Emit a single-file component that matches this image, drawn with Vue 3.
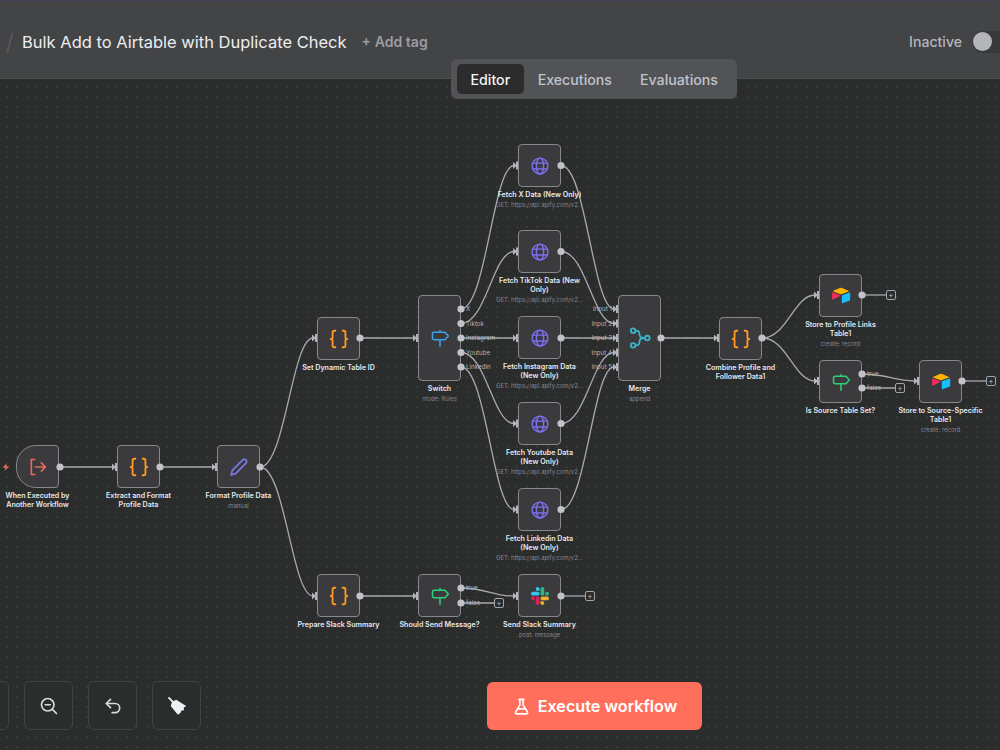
<script setup>
const nodes = [
  { id: 'trig', x: 16, y: 445, icon: 'exit', lines: ['When Executed by', 'Another Workflow'], shape: 'trigger' },
  { id: 'ext', x: 117, y: 445, icon: 'code', lines: ['Extract and Format', 'Profile Data'] },
  { id: 'fmt', x: 217, y: 445, icon: 'pen', lines: ['Format Profile Data'], sub: 'manual' },
  { id: 'set', x: 317, y: 317, icon: 'code', lines: ['Set Dynamic Table ID'] },
  { id: 'sw', x: 418, y: 295, h: 86, icon: 'sign', tone: 'blue', lines: ['Switch'], sub: 'mode: Rules' },
  { id: 'x', x: 518, y: 144, icon: 'globe', lines: ['Fetch X Data (New Only)'], sub: 'GET: https://api.apify.com/v2...' },
  { id: 'tt', x: 518, y: 230, icon: 'globe', lines: ['Fetch TikTok Data (New', 'Only)'], sub: 'GET: https://api.apify.com/v2...' },
  { id: 'ig', x: 518, y: 316, icon: 'globe', lines: ['Fetch Instagram Data', '(New Only)'], sub: 'GET: https://api.apify.com/v2...' },
  { id: 'yt', x: 518, y: 402, icon: 'globe', lines: ['Fetch Youtube Data', '(New Only)'], sub: 'GET: https://api.apify.com/v2...' },
  { id: 'li', x: 518, y: 488, icon: 'globe', lines: ['Fetch Linkedin Data', '(New Only)'], sub: 'GET: https://api.apify.com/v2...' },
  { id: 'mg', x: 618, y: 295, h: 86, icon: 'merge', lines: ['Merge'], sub: 'append' },
  { id: 'cb', x: 719, y: 317, icon: 'code', lines: ['Combine Profile and', 'Follower Data1'] },
  { id: 'sp', x: 819, y: 274, icon: 'air', lines: ['Store to Profile Links', 'Table1'], sub: 'create: record' },
  { id: 'is', x: 819, y: 360, icon: 'sign', tone: 'green', lines: ['Is Source Table Set?'] },
  { id: 'ss', x: 919, y: 360, icon: 'air', lines: ['Store to Source-Specific', 'Table1'], sub: 'create: record' },
  { id: 'pr', x: 317, y: 574, icon: 'code', lines: ['Prepare Slack Summary'] },
  { id: 'sh', x: 418, y: 574, icon: 'sign', tone: 'green', lines: ['Should Send Message?'] },
  { id: 'sl', x: 518, y: 574, icon: 'slack', lines: ['Send Slack Summary'], sub: 'post: message' },
]

const swY = [309, 323.5, 338, 352.5, 367]
const fetchY = [165.5, 251.5, 338, 423.5, 509.5]
const links = [
  [60, 467, 117, 467], [160, 467, 217, 467], [260, 467, 317, 338], [260, 467, 317, 596],
  [360, 338, 418, 338], [661, 338, 719, 338], [762, 338, 819, 295], [762, 338, 819, 381],
  [862, 374, 919, 381], [360, 596, 418, 596], [461, 588, 518, 596],
]
swY.forEach((y, i) => links.push([461, y, 518, fetchY[i]]))
fetchY.forEach((y, i) => links.push([561, y, 618, swY[i]]))

const curve = ([a, b, c, d]) => {
  const off = b === d ? 0 : 25
  return `M${a} ${b}C${a + off} ${b} ${c - off} ${d} ${c - 4} ${d}`
}
const edges = links.map(curve)
const stubs = [
  [862, 295, 886], [862, 388, 895], [962, 381, 986], [461, 603, 494], [561, 596, 585],
]
const pluses = [[891, 295], [900, 388], [991, 381], [499, 603], [590, 596]]
const inputs = links.map(l => [l[2], l[3]])
const dots = [
  [60, 467], [160, 467], [260, 467], [360, 338], [661, 338], [762, 338], [862, 295], [862, 374], [862, 388],
  [962, 381], [360, 596], [461, 588], [461, 603], [561, 596],
  ...swY.map(y => [461, y]), ...fetchY.map(y => [561, y]),
]
const swNames = ['X', 'Tiktok', 'Instagram', 'Youtube', 'LinkedIn']
const ports = [
  ...swNames.map((t, i) => ({ t, x: 466, y: swY[i], end: false })),
  ...swY.map((y, i) => ({ t: `Input ${i + 1}`, x: 612, y, end: true })),
  { t: 'true', x: 466, y: 588, end: false },
  { t: 'false', x: 466, y: 603, end: false },
  { t: 'true', x: 867, y: 374, end: false },
  { t: 'false', x: 867, y: 388, end: false },
]
const px = v => `${v}px`
</script>

<template>
  <div class="app">
    <header class="topbar">
      <span class="slash">/</span>
      <h1 class="title">Bulk Add to Airtable with Duplicate Check</h1>
      <span class="tag">+ Add tag</span>
      <span class="state">Inactive</span>
      <span class="toggle"><i class="knob"></i></span>
    </header>

    <nav class="tabs">
      <span class="tab on">Editor</span>
      <span class="tab">Executions</span>
      <span class="tab">Evaluations</span>
    </nav>

    <main class="canvas">
      <div class="plane">
        <svg class="wires" width="1000" height="750" viewBox="0 0 1000 750">
          <path v-for="(d, i) in edges" :key="i" :d="d" class="wire" />
          <path v-for="(s, i) in stubs" :key="'s' + i" :d="`M${s[0]} ${s[1]}H${s[2]}`" class="wire" />
          <g v-for="(p, i) in inputs" :key="'i' + i">
            <path :d="`M${p[0] - 5} ${p[1] - 3.5}L${p[0] - 1} ${p[1]}L${p[0] - 5} ${p[1] + 3.5}Z`" class="tip" />
            <rect :x="p[0] - 2" :y="p[1] - 4" width="3" height="8" class="tip" />
          </g>
        </svg>

        <template v-for="n in nodes" :key="n.id">
          <div class="node" :class="{ trigger: n.shape === 'trigger' }"
            :style="{ left: px(n.x), top: px(n.y), height: px(n.h || 43) }">
            <svg v-if="n.icon === 'code'" class="icon wide" viewBox="0 0 24 24" fill="none" stroke="#ff9922" stroke-width="2"
              stroke-linecap="round" stroke-linejoin="round">
              <path d="M8 3H7a2 2 0 0 0-2 2v5a2 2 0 0 1-2 2 2 2 0 0 1 2 2v5a2 2 0 0 0 2 2h1" />
              <path d="M16 21h1a2 2 0 0 0 2-2v-5a2 2 0 0 1 2-2 2 2 0 0 1-2-2V5a2 2 0 0 0-2-2h-1" />
            </svg>
            <svg v-else-if="n.icon === 'exit'" class="icon" viewBox="0 0 24 24" fill="none" stroke="#e9695a" stroke-width="2"
              stroke-linecap="round" stroke-linejoin="round">
              <path d="M8 3H4v18h4" />
              <path d="M9 12h12M16 7l5 5-5 5" />
            </svg>
            <svg v-else-if="n.icon === 'pen'" class="icon" viewBox="0 0 24 24" fill="none" stroke="#7b78e6" stroke-width="2"
              stroke-linecap="round" stroke-linejoin="round">
              <path d="M16.5 3.5a2.6 2.6 0 0 1 3.8 3.8L8 20l-5.5 1.5L4 16Z" />
            </svg>
            <svg v-else-if="n.icon === 'globe'" class="icon" viewBox="0 0 24 24" fill="none" stroke="#7b6ff0" stroke-width="1.7">
              <circle cx="12" cy="12" r="9.5" />
              <ellipse cx="12" cy="12" rx="4.3" ry="9.5" />
              <path d="M3.2 8.5h17.6M3.2 15.5h17.6" />
            </svg>
            <svg v-else-if="n.icon === 'sign'" class="icon" viewBox="0 0 24 24" fill="none"
              :stroke="n.tone === 'blue' ? '#3fa0ea' : '#2fd07a'" stroke-width="1.8" stroke-linecap="round"
              stroke-linejoin="round">
              <path d="M12 3v2M12 14v8" />
              <path d="M5 5h13l4 4.500-4 4.500H5a2 2 0 0 1-2-2V7a2 2 0 0 1 2-2Z" />
            </svg>
            <svg v-else-if="n.icon === 'merge'" class="icon wide" viewBox="0 0 24 24" fill="none" stroke="#3ab4c8" stroke-width="2">
              <circle cx="4.500" cy="4" r="2.500" />
              <circle cx="4.500" cy="20" r="2.500" />
              <circle cx="20" cy="12" r="2.500" />
              <path d="M7 4h1c3 0 3.500 2.500 3.500 4.500S12.500 12 17.500 12c-5 0-6 1.500-6 3.500S11 20 8 20H7" />
            </svg>
            <svg v-else-if="n.icon === 'air'" class="icon wide" viewBox="0 0 24 24">
              <path d="M10.7 3.3 3.6 6.200c-.4.200-.4.700 0 .900l7.100 2.800c.800.300 1.700.300 2.500 0l7.100-2.800c.400-.200.400-.700 0-.900l-7.100-2.900a3.300 3.300 0 0 0-2.500 0Z" fill="#fcb400" />
              <path d="M12.900 11.700v7.700c0 .400.400.600.700.500l8-3c.200-.100.400-.300.400-.500V8.700c0-.400-.400-.600-.700-.500l-8 3c-.200.100-.400.300-.400.500Z" fill="#18bfff" />
              <path d="m11 12-2.500 1.200-.200.100-5.200 2.500c-.300.200-.800-.100-.800-.500V8.600c0-.100.100-.300.200-.400l.200-.100c.100-.100.300-.100.400 0l7.900 3.200c.400.100.400.600 0 .700Z" fill="#f82b60" />
            </svg>
            <svg v-else-if="n.icon === 'slack'" class="icon small" viewBox="0 0 24 24">
              <path fill="#e01e5a" d="M5.042 15.165a2.528 2.528 0 0 1-2.52 2.523A2.528 2.528 0 0 1 0 15.165a2.527 2.527 0 0 1 2.522-2.52h2.52v2.520zM6.313 15.165a2.527 2.527 0 0 1 2.521-2.520 2.527 2.527 0 0 1 2.521 2.520v6.313A2.528 2.528 0 0 1 8.834 24a2.528 2.528 0 0 1-2.521-2.522v-6.313z" />
              <path fill="#36c5f0" d="M8.834 5.042a2.528 2.528 0 0 1-2.521-2.520A2.528 2.528 0 0 1 8.834 0a2.528 2.528 0 0 1 2.521 2.522v2.520H8.834zM8.834 6.313a2.528 2.528 0 0 1 2.521 2.521 2.528 2.528 0 0 1-2.521 2.521H2.522A2.528 2.528 0 0 1 0 8.834a2.528 2.528 0 0 1 2.522-2.521h6.312z" />
              <path fill="#2eb67d" d="M18.956 8.834a2.528 2.528 0 0 1 2.522-2.521A2.528 2.528 0 0 1 24 8.834a2.528 2.528 0 0 1-2.522 2.521h-2.522V8.834zM17.688 8.834a2.528 2.528 0 0 1-2.523 2.521 2.527 2.527 0 0 1-2.520-2.521V2.522A2.527 2.527 0 0 1 15.165 0a2.528 2.528 0 0 1 2.523 2.522v6.312z" />
              <path fill="#ecb22e" d="M15.165 18.956a2.528 2.528 0 0 1 2.523 2.522A2.528 2.528 0 0 1 15.165 24a2.527 2.527 0 0 1-2.520-2.522v-2.522h2.520zM15.165 17.688a2.527 2.527 0 0 1-2.520-2.523 2.526 2.526 0 0 1 2.520-2.520h6.313A2.527 2.527 0 0 1 24 15.165a2.528 2.528 0 0 1-2.522 2.523h-6.313z" />
            </svg>
          </div>
          <div class="label" :style="{ left: px(n.x - 38.5), top: px(n.y + (n.h || 43) + 2.7) }">
            <div v-for="l in n.lines" :key="l" class="name">{{ l }}</div>
            <div v-if="n.sub" class="sub">{{ n.sub }}</div>
          </div>
        </template>

        <svg class="wires over" width="1000" height="750" viewBox="0 0 1000 750">
          <circle v-for="(d, i) in dots" :key="i" :cx="d[0]" :cy="d[1]" r="3.6" class="dot" />
        </svg>

        <span v-for="(p, i) in ports" :key="'p' + i" class="port" :class="{ end: p.end }"
          :style="p.end ? { right: px(1000 - p.x), top: px(p.y - 5) } : { left: px(p.x), top: px(p.y - 5) }">{{ p.t }}</span>

        <span v-for="(p, i) in pluses" :key="'a' + i" class="plus" :style="{ left: px(p[0] - 5), top: px(p[1] - 5) }">+</span>

        <svg class="bolt" viewBox="0 0 12 12"><path d="M7 0 1 7h4l-1 5 7-7H6.500Z" fill="#e9695a" /></svg>
      </div>
    </main>

    <div class="tools">
      <button class="tool"></button>
      <button class="tool">
        <svg viewBox="0 0 24 24" fill="none" stroke="#d8dade" stroke-width="2" stroke-linecap="round">
          <circle cx="10.500" cy="10.500" r="7.500" /><path d="M7.500 10.500h6M16 16l5 5" />
        </svg>
      </button>
      <button class="tool">
        <svg viewBox="0 0 24 24" fill="none" stroke="#d8dade" stroke-width="2" stroke-linecap="round" stroke-linejoin="round">
          <path d="M9 14 4 9l5-5" /><path d="M4 9h10.500a5.500 5.500 0 0 1 0 11H11" />
        </svg>
      </button>
      <button class="tool">
        <svg viewBox="0 0 24 24">
          <path d="M1 2.500 2.500 1 9 7.500 7.500 9Z" fill="#eef0f4" />
          <path d="M6 7 11 4.500 23 12 20 14 20.500 17 17.500 17.500 16 20.500 13 22.500 4.500 12Z" fill="#eef0f4" />
        </svg>
      </button>
    </div>

    <button class="run">
      <svg viewBox="0 0 24 24" fill="none" stroke="#fff" stroke-width="2" stroke-linecap="round" stroke-linejoin="round">
        <path d="M9 3h6M10 3v7L4.500 19a1.500 1.500 0 0 0 1.300 2.300h12.400a1.500 1.500 0 0 0 1.300-2.300L14 10V3M7.500 15h9" />
      </svg>
      Execute workflow
    </button>
  </div>
</template>

<style>
html, body { margin: 0; background: #2b2c2c; }
</style>

<style scoped>
.app {
  position: relative;
  width: 1000px;
  height: 750px;
  overflow: hidden;
  display: flex;
  flex-direction: column;
  font-family: Inter, "Liberation Sans", sans-serif;
  background: #2b2c2c;
}
.topbar {
  flex: none;
  height: 73px;
  padding: 4px 0 0 6px;
  display: flex;
  align-items: center;
  background: #434446;
  border-top: 1px solid #453c57;
  border-bottom: 1px solid #4d4e50;
  color: #f0f1f3;
}
.slash { font-size: 22px; color: #5e5f62; font-weight: 300; width: 16px; }
.title { margin: 0; font-size: 16.500px; font-weight: 400; color: #eceef0; white-space: nowrap; }
.tag { margin-left: 15px; font-size: 14.100px; font-weight: 600; color: #9a9ca2; }
.state { margin-left: auto; font-size: 14.100px; font-weight: 500; color: #b3b6bd; }
.toggle {
  margin-left: 10px;
  width: 27px;
  height: 22px;
  border-radius: 11px 0 0 11px;
  background: #38393b;
  display: flex;
  align-items: center;
  padding-left: 1px;
}
.knob { width: 19px; height: 19px; border-radius: 50%; background: #b4b5ba; }
.tabs {
  position: absolute;
  left: 451px;
  top: 59px;
  width: 286px;
  height: 40px;
  box-sizing: border-box;
  padding: 5px 5px 5px 6px;
  display: flex;
  border-radius: 6px;
  background: #525356;
  z-index: 3;
}
.tab { padding: 0 14px; line-height: 31px; font-size: 14.200px; font-weight: 500; color: #c0c3cb; white-space: nowrap; }
.tab.on { width: 67px; box-sizing: border-box; padding: 0; text-align: center; background: #2c2c2d; color: #f2f3f5; border-radius: 5px; }
.canvas {
  flex: 1;
  background-color: #2b2c2c;
  background-image: radial-gradient(circle, #464748 0.6px, transparent 0.8px);
  background-size: 10px 10px;
  background-position: 2px 3px;
}
.plane { position: absolute; inset: 0; }
.wires { position: absolute; left: 0; top: 0; pointer-events: none; }
.wire { fill: none; stroke: #a8a9ae; stroke-width: 1.300; }
.tip { fill: #b4b5bb; }
.dot { fill: #c2c3c9; }
.node {
  position: absolute;
  box-sizing: border-box;
  width: 43px;
  display: flex;
  align-items: center;
  justify-content: center;
  border: 1.500px solid #87888e;
  border-radius: 4px;
  background: #3b3b3e;
}
.node.trigger { border-radius: 20px 4px 4px 20px; }
.icon { width: 20px; height: 20px; }
.icon.wide { width: 22px; height: 22px; }
.icon.small { width: 18px; height: 18px; }
.label {
  position: absolute;
  width: 120px;
  text-align: center;
  white-space: nowrap;
}
.name { font-size: 7.100px; line-height: 9.500px; font-weight: 600; color: #e6e8ee; }
.sub { margin-top: 1.500px; font-size: 5.950px; line-height: 8px; color: #85878d; }
.port { position: absolute; font-size: 6.200px; line-height: 10px; color: #b4b6bc; }
.plus {
  position: absolute;
  box-sizing: border-box;
  width: 10px;
  height: 10px;
  border: 1px solid #a3a4a9;
  border-radius: 2px;
  background: #2b2c2c;
  color: #b8b9be;
  font-size: 8px;
  line-height: 8px;
  text-align: center;
}
.bolt { position: absolute; left: 2px; top: 463px; width: 8px; height: 8px; }
.tools {
  position: absolute;
  left: -40px;
  top: 681px;
  display: flex;
  gap: 15px;
}
.tool {
  width: 49px;
  height: 49px;
  padding: 0;
  display: flex;
  align-items: center;
  justify-content: center;
  border: 1px solid #414243;
  border-radius: 6px;
  background: #2b2c2c;
}
.tool svg { width: 20px; height: 20px; }
.run {
  position: absolute;
  left: 487px;
  top: 682px;
  width: 215px;
  height: 48px;
  display: flex;
  align-items: center;
  justify-content: center;
  gap: 7px;
  border: 0;
  border-radius: 6px;
  background: #ff6f5c;
  color: #fff;
  font-family: inherit;
  font-size: 16.200px;
  font-weight: 600;
}
.run svg { width: 19px; height: 19px; }
</style>
